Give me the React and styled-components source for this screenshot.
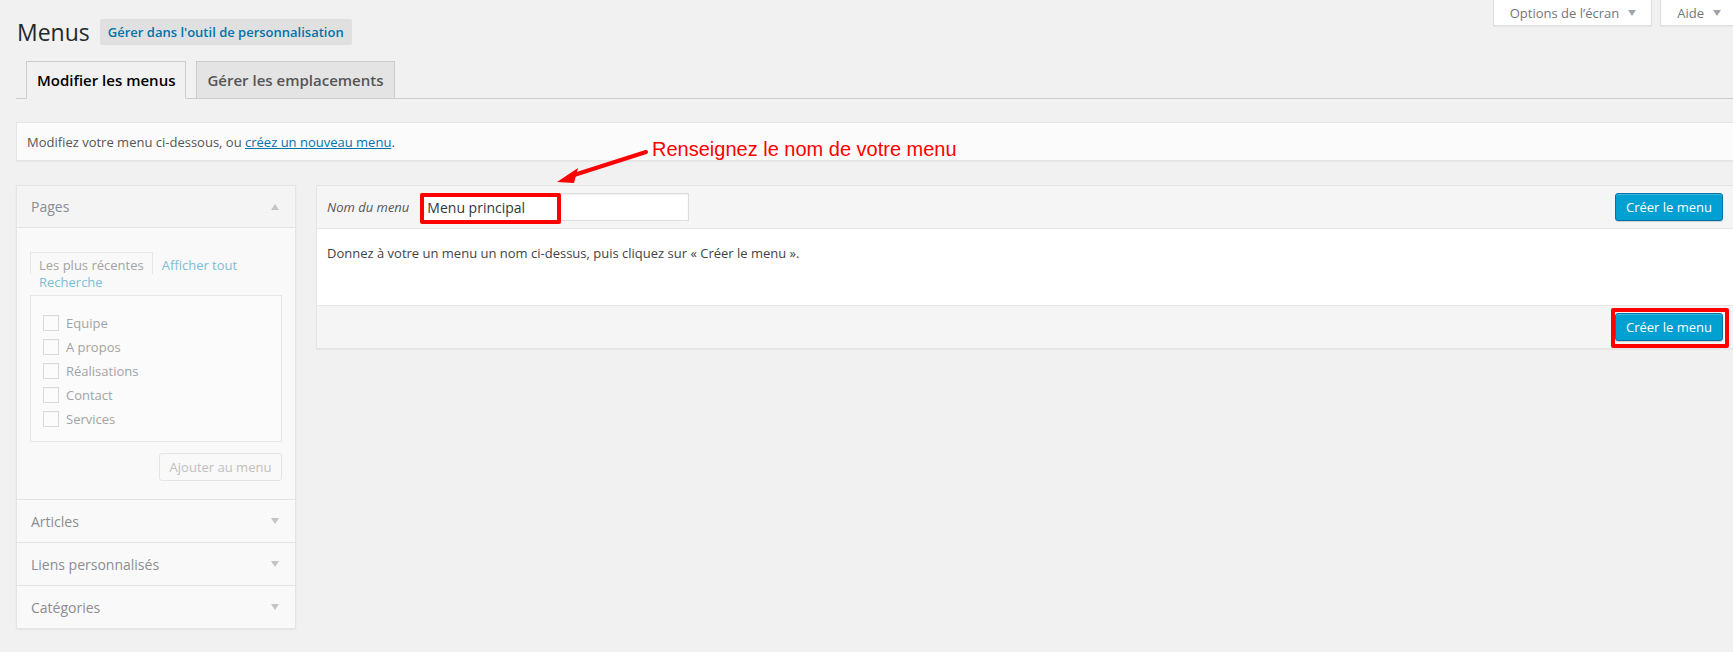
import React from "react";
import styled, { createGlobalStyle } from "styled-components";

const GlobalStyle = createGlobalStyle`
  html, body {
    margin: 0;
    padding: 0;
    background: #f1f1f1;
    overflow: hidden;
  }
  body {
    font-family: "Open Sans", "Noto Sans", sans-serif;
    font-size: 13px;
    color: #444;
  }
  * {
    box-sizing: border-box;
  }
`;

const Page = styled.div`
  position: relative;
  padding-left: 16px;
  margin-right: -1px;
  height: 652px;
`;

const ScreenMeta = styled.div`
  float: right;
  display: flex;
  gap: 8px;
`;

const MetaButton = styled.button`
  display: flex;
  align-items: center;
  gap: 9px;
  height: 26px;
  padding: 0 ${(props) => props.$padRight || 15}px 0 16px;
  border: 1px solid #dedede;
  border-top: none;
  background: #fff;
  box-shadow: 0 1px 1px rgba(0, 0, 0, 0.04);
  font-family: inherit;
  font-size: 13px;
  color: #72777c;
`;

const Caret = styled.span`
  width: 0;
  height: 0;
  border-left: 4px solid transparent;
  border-right: 4px solid transparent;
  border-${(props) => (props.$up ? "bottom" : "top")}: 6px solid
    ${(props) => props.$color || "#a0a5aa"};
`;

const TitleRow = styled.div`
  display: flex;
  align-items: center;
  gap: 10px;
  padding-top: 19px;
  height: 45px;
`;

const Title = styled.h1`
  margin: 0 0 0 1px;
  font-size: 23px;
  font-weight: 400;
  color: #23282d;
  line-height: 26px;
`;

const TitleAction = styled.a`
  display: flex;
  align-items: center;
  height: 26px;
  padding: 0 8px;
  border-radius: 2px;
  background: #e0e0e0;
  color: #0073aa;
  font-size: 13px;
  font-weight: 600;
  text-decoration: none;
`;

const Tabs = styled.div`
  display: flex;
  align-items: flex-end;
  gap: 10px;
  margin-top: 16px;
  padding-left: 10px;
  height: 38px;
  border-bottom: 1px solid #ccc;
`;

const Tab = styled.a`
  display: flex;
  align-items: center;
  height: ${(props) => (props.$active ? 38 : 37)}px;
  margin-bottom: ${(props) => (props.$active ? -1 : 0)}px;
  padding: 0 10px;
  border: 1px solid #ccc;
  border-bottom: ${(props) => (props.$active ? "1px solid #f1f1f1" : "none")};
  background: ${(props) => (props.$active ? "#f1f1f1" : "#e4e4e4")};
  color: ${(props) => (props.$active ? "#000" : "#555")};
  font-size: 15px;
  font-weight: 600;
  padding-bottom: ${(props) => (props.$active ? 1 : 0)}px;
`;

const Notice = styled.div`
  display: flex;
  align-items: center;
  margin-top: 23px;
  height: 39px;
  padding: 0 10px;
  background: #fbfbfb;
  border: 1px solid #e5e5e5;
  box-shadow: 0 1px 1px rgba(0, 0, 0, 0.04);
  color: #555;

  a {
    color: #0073aa;
  }
`;

const Columns = styled.div`
  display: flex;
  align-items: flex-start;
  gap: 20px;
  margin-top: 24px;
`;

const SidePanel = styled.div`
  width: 280px;
  flex: none;
  background: #f9f9f9;
  border: 1px solid #e5e5e5;
  box-shadow: 0 1px 2px rgba(0, 0, 0, 0.06);
`;

const Section = styled.div`
  & + & {
    border-top: 1px solid #e3e3e3;
  }
`;

const SectionHead = styled.div`
  display: flex;
  align-items: center;
  justify-content: space-between;
  height: 42px;
  padding: 0 16px 0 14px;
  font-size: 14px;
  color: #8a8d91;
  background: ${(props) => (props.$open ? "#f4f4f4" : "#f9f9f9")};
  border-bottom: ${(props) => (props.$open ? "1px solid #e3e3e3" : "none")};
`;

const SectionBody = styled.div`
  padding: 24px 13px 18px 13px;
`;

const PickTabs = styled.div`
  display: flex;
  flex-wrap: wrap;
  align-items: flex-end;
  line-height: 17px;
  font-size: 13px;
`;

const PickTab = styled.span`
  padding: ${(props) => (props.$active ? "4px 8px 0" : "0 9px")};
  border: ${(props) => (props.$active ? "1px solid #e6e6e6" : "none")};
  border-bottom: none;
  color: ${(props) => (props.$active ? "#a3a3a3" : "#80bcd6")};
`;

const PickBox = styled.div`
  margin-top: 4px;
  padding: 15px 12px 10px;
  border: 1px solid #e6e6e6;
  background: #fbfbfb;
`;

const PickRow = styled.label`
  display: flex;
  align-items: center;
  gap: 7px;
  height: 24px;
  color: #a3a3a3;
`;

const FakeCheck = styled.span`
  width: 16px;
  height: 16px;
  border: 1px solid #dadada;
  background: #fcfcfc;
  box-shadow: inset 0 1px 2px rgba(0, 0, 0, 0.03);
`;

const PanelActions = styled.div`
  display: flex;
  justify-content: flex-end;
  margin-top: 11px;
`;

const GhostButton = styled.button`
  width: 123px;
  height: 28px;
  padding: 0;
  border: 1px solid #e4e4e4;
  border-radius: 3px;
  background: #f9f9f9;
  color: #c0c0c0;
  font-family: inherit;
  font-size: 13px;
`;

const MenuPanel = styled.div`
  flex: 1;
  border: 1px solid #e5e5e5;
  box-shadow: 0 1px 1px rgba(0, 0, 0, 0.04);
  background: #fff;
`;

const MenuBar = styled.div`
  display: flex;
  align-items: center;
  gap: 11px;
  height: ${(props) => props.$h}px;
  padding: 0 10px;
  background: #f5f5f5;
  border-${(props) => props.$side}: 1px solid #e5e5e5;
`;

const NameLabel = styled.span`
  font-style: italic;
  color: #555;
`;

const InputWrap = styled.div`
  position: relative;
`;

const NameInput = styled.input`
  display: block;
  width: 269px;
  height: 28px;
  padding: 0 6px;
  border: 1px solid #ddd;
  background: #fff;
  box-shadow: inset 0 1px 2px rgba(0, 0, 0, 0.07);
  font-family: inherit;
  font-size: 14px;
  color: #32373c;
  outline: none;
`;

const PrimaryButton = styled.button`
  position: relative;
  margin-left: auto;
  width: 108px;
  height: 28px;
  padding: 0;
  border: 1px solid #0073aa;
  border-radius: 3px;
  background: #00a0d2;
  box-shadow: inset 0 1px 0 rgba(120, 200, 230, 0.5),
    0 1px 0 rgba(0, 0, 0, 0.15);
  color: #fff;
  font-family: inherit;
  font-size: 13px;
`;

const MenuBody = styled.div`
  height: 76px;
  padding: 14px 10px 0;
  color: #444;
  line-height: 20px;
`;

const Highlight = styled.span`
  position: absolute;
  left: ${(props) => props.$l}px;
  top: ${(props) => props.$t}px;
  right: ${(props) => props.$r}px;
  bottom: ${(props) => props.$b}px;
  border: 4px solid #ff0000;
  border-radius: 2px;
  pointer-events: none;
`;

const Callout = styled.div`
  position: absolute;
  left: 652px;
  top: 139px;
  font-family: "Liberation Sans", Arial, sans-serif;
  font-size: 20px;
  line-height: 1;
  color: #ff0000;
  white-space: nowrap;
`;

const ArrowSvg = styled.svg`
  position: absolute;
  left: 550px;
  top: 145px;
  overflow: visible;
`;

const pages = ["Equipe", "A propos", "Réalisations", "Contact", "Services"];
const closed = ["Articles", "Liens personnalisés", "Catégories"];

export default function App() {
  return (
    <>
      <GlobalStyle />
      <Page>
        <ScreenMeta>
          <MetaButton>
            <span>Options de l’écran</span>
            <Caret />
          </MetaButton>
          <MetaButton $padRight={12}>
            <span>Aide</span>
            <Caret />
          </MetaButton>
        </ScreenMeta>

        <TitleRow>
          <Title>Menus</Title>
          <TitleAction>Gérer dans l'outil de personnalisation</TitleAction>
        </TitleRow>

        <Tabs>
          <Tab $active>Modifier les menus</Tab>
          <Tab>Gérer les emplacements</Tab>
        </Tabs>

        <Notice>
          Modifiez votre menu ci-dessous, ou&nbsp;<a href="#">créez un nouveau menu</a>.
        </Notice>

        <Columns>
          <SidePanel>
            <Section>
              <SectionHead $open>
                <span>Pages</span>
                <Caret $up $color="#c4c4c4" />
              </SectionHead>
              <SectionBody>
                <PickTabs>
                  <PickTab $active>Les plus récentes</PickTab>
                  <PickTab>Afficher tout</PickTab>
                  <PickTab>Recherche</PickTab>
                </PickTabs>
                <PickBox>
                  {pages.map((p) => (
                    <PickRow key={p}>
                      <FakeCheck />
                      {p}
                    </PickRow>
                  ))}
                </PickBox>
                <PanelActions>
                  <GhostButton>Ajouter au menu</GhostButton>
                </PanelActions>
              </SectionBody>
            </Section>
            {closed.map((c) => (
              <Section key={c}>
                <SectionHead>
                  <span>{c}</span>
                  <Caret $color="#c4c4c4" />
                </SectionHead>
              </Section>
            ))}
          </SidePanel>

          <MenuPanel>
            <MenuBar $h={43} $side="bottom">
              <NameLabel>Nom du menu</NameLabel>
              <InputWrap>
                <NameInput defaultValue="Menu principal" />
                <Highlight $l={0} $t={0} $r={128} $b={-3} />
              </InputWrap>
              <PrimaryButton>Créer le menu</PrimaryButton>
            </MenuBar>
            <MenuBody>
              Donnez à votre un menu un nom ci-dessus, puis cliquez sur « Créer le menu ».
            </MenuBody>
            <MenuBar $h={43} $side="top">
              <PrimaryButton>
                Créer le menu
                <Highlight $l={-5} $t={-6} $r={-7} $b={-8} />
              </PrimaryButton>
            </MenuBar>
          </MenuPanel>
        </Columns>

        <ArrowSvg width="100" height="40" viewBox="0 0 100 40">
          <line x1="96" y1="7" x2="24" y2="30" stroke="#ff0000" strokeWidth="4" strokeLinecap="round" />
          <polygon points="7,37 28,23 24,38" fill="#ff0000" />
        </ArrowSvg>
        <Callout>Renseignez le nom de votre menu</Callout>
      </Page>
    </>
  );
}
